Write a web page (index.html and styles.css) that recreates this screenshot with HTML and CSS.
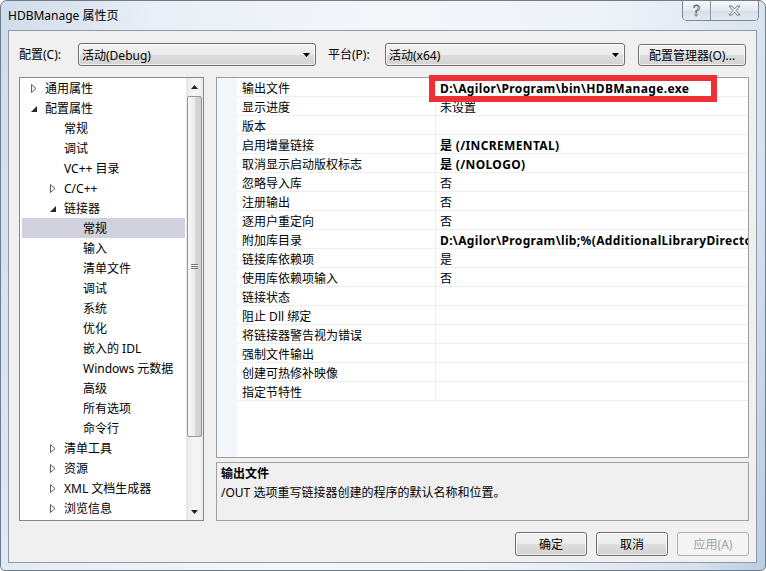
FILE: index.html
```html
<!DOCTYPE html>
<html lang="zh-CN">
  <head>
    <meta charset="UTF-8" />
    <title>HDBManage 属性页</title>
    <link rel="stylesheet" href="styles.css">
  </head>
  <body>
    <div class="window">
      <div class="titlebar">
        <span class="title">HDBManage 属性页</span>
        <div class="caption">
          <span class="cap cap-help">?</span>
          <span class="cap cap-close">
            <svg width="13" height="11" viewBox="0 0 13 11"><path d="M1 1h3l2.5 3 2.5-3h3l-4 4.5 4 4.5h-3l-2.5-3-2.5 3h-3l4-4.5z" fill="#f6f6f6" stroke="#6a6f75" stroke-width="0.9"/></svg>
          </span>
        </div>
      </div>

      <div class="client">
        <div class="toolbar">
          <span class="lbl lbl-cfg">配置(C):</span>
          <div class="combo combo-cfg">
            <span>活动(Debug)</span>
            <svg width="7" height="4" viewBox="0 0 7 4"><path d="M0 0H7L3.5 4Z" fill="#000"/></svg>
          </div>
          <span class="lbl lbl-plat">平台(P):</span>
          <div class="combo combo-plat">
            <span>活动(x64)</span>
            <svg width="7" height="4" viewBox="0 0 7 4"><path d="M0 0H7L3.5 4Z" fill="#000"/></svg>
          </div>
          <button class="btn btn-mgr">配置管理器(O)...</button>
        </div>

        <div class="main">
          <!-- 左侧树 -->
          <div class="tree">
            <ul class="tree-list">
              <li class="lv0"><i class="tw closed"></i>通用属性</li>
              <li class="lv0"><i class="tw open"></i>配置属性</li>
              <li class="lv1"><i class="tw"></i>常规</li>
              <li class="lv1"><i class="tw"></i>调试</li>
              <li class="lv1"><i class="tw"></i>VC++ 目录</li>
              <li class="lv1"><i class="tw closed"></i>C/C++</li>
              <li class="lv1"><i class="tw open"></i>链接器</li>
              <li class="lv2 sel"><i class="tw"></i>常规</li>
              <li class="lv2"><i class="tw"></i>输入</li>
              <li class="lv2"><i class="tw"></i>清单文件</li>
              <li class="lv2"><i class="tw"></i>调试</li>
              <li class="lv2"><i class="tw"></i>系统</li>
              <li class="lv2"><i class="tw"></i>优化</li>
              <li class="lv2"><i class="tw"></i>嵌入的 IDL</li>
              <li class="lv2"><i class="tw"></i>Windows 元数据</li>
              <li class="lv2"><i class="tw"></i>高级</li>
              <li class="lv2"><i class="tw"></i>所有选项</li>
              <li class="lv2"><i class="tw"></i>命令行</li>
              <li class="lv1"><i class="tw closed"></i>清单工具</li>
              <li class="lv1"><i class="tw closed"></i>资源</li>
              <li class="lv1"><i class="tw closed"></i>XML 文档生成器</li>
              <li class="lv1"><i class="tw closed"></i>浏览信息</li>
            </ul>
            <div class="vscroll">
              <div class="sb-btn"><svg width="7" height="4" viewBox="0 0 7 4"><path d="M0 4H7L3.5 0Z" fill="#222"/></svg></div>
              <div class="sb-track">
                <div class="sb-thumb"><span class="grip"></span></div>
              </div>
              <div class="sb-btn"><svg width="7" height="4" viewBox="0 0 7 4"><path d="M0 0H7L3.5 4Z" fill="#222"/></svg></div>
            </div>
          </div>

          <!-- 右侧属性表 -->
          <div class="right">
            <div class="grid">
              <div class="rows">
                <div class="row"><span class="gut"></span><span class="name">输出文件</span><span class="val b">D:\Agilor\Program\bin\HDBManage.exe</span></div>
                <div class="row"><span class="gut"></span><span class="name">显示进度</span><span class="val">未设置</span></div>
                <div class="row"><span class="gut"></span><span class="name">版本</span><span class="val"></span></div>
                <div class="row"><span class="gut"></span><span class="name">启用增量链接</span><span class="val b">是 (/INCREMENTAL)</span></div>
                <div class="row"><span class="gut"></span><span class="name">取消显示启动版权标志</span><span class="val b">是 (/NOLOGO)</span></div>
                <div class="row"><span class="gut"></span><span class="name">忽略导入库</span><span class="val">否</span></div>
                <div class="row"><span class="gut"></span><span class="name">注册输出</span><span class="val">否</span></div>
                <div class="row"><span class="gut"></span><span class="name">逐用户重定向</span><span class="val">否</span></div>
                <div class="row"><span class="gut"></span><span class="name">附加库目录</span><span class="val b">D:\Agilor\Program\lib;%(AdditionalLibraryDirectories)</span></div>
                <div class="row"><span class="gut"></span><span class="name">链接库依赖项</span><span class="val">是</span></div>
                <div class="row"><span class="gut"></span><span class="name">使用库依赖项输入</span><span class="val">否</span></div>
                <div class="row"><span class="gut"></span><span class="name">链接状态</span><span class="val"></span></div>
                <div class="row"><span class="gut"></span><span class="name">阻止 Dll 绑定</span><span class="val"></span></div>
                <div class="row"><span class="gut"></span><span class="name">将链接器警告视为错误</span><span class="val"></span></div>
                <div class="row"><span class="gut"></span><span class="name">强制文件输出</span><span class="val"></span></div>
                <div class="row"><span class="gut"></span><span class="name">创建可热修补映像</span><span class="val"></span></div>
                <div class="row"><span class="gut"></span><span class="name">指定节特性</span><span class="val"></span></div>
              </div>
              <div class="mark"></div>
            </div>
            <div class="desc">
              <div class="desc-title">输出文件</div>
              <div>/OUT 选项重写链接器创建的程序的默认名称和位置。</div>
            </div>
          </div>
        </div>

        <div class="footer">
          <button class="btn btn-dlg">确定</button>
          <button class="btn btn-dlg">取消</button>
          <button class="btn btn-dlg" disabled>应用(A)</button>
        </div>
      </div>
    </div>
  </body>
</html>
```

FILE: styles.css
```css
* {
  box-sizing: border-box;
}
html,
body {
  margin: 0;
  padding: 0;
}
body {
  width: 766px;
  height: 571px;
  overflow: hidden;
  font-family: "Noto Sans", "Noto Sans CJK SC", sans-serif;
  font-size: 12px;
  color: #000;
  background: #fff;
}
.window {
  width: 766px;
  height: 571px;
  display: flex;
  flex-direction: column;
  padding: 0 8px 7px 7px;
  border: 1px solid #6f7c8a;
  border-radius: 7px 7px 5px 5px;
  background: linear-gradient(100deg, #cfdce9 0%, #e9eff6 18%, #f4f7fa 45%, #eef3f8 70%, #d5e1ee 92%, #b9cde2 100%);
}

/* 标题栏 */
.titlebar {
  height: 29px;
  display: flex;
  justify-content: space-between;
  align-items: flex-start;
  margin-right: -2px;
}
.title {
  padding-top: 6px;
  line-height: 17px;
}
.caption {
  display: flex;
  border: 1px solid #7b8794;
  border-top: none;
  border-radius: 0 0 5px 5px;
  overflow: hidden;
}
.cap {
  height: 19px;
  display: flex;
  align-items: center;
  justify-content: center;
  background: linear-gradient(#f6f8fb, #e3e9f0 50%, #d6dee8 51%, #e4eaf1);
}
.cap-help {
  width: 28px;
  border-right: 1px solid #8d98a5;
  font-family: "DejaVu Serif", serif;
  font-size: 14px;
  color: #f8f8f8;
  -webkit-text-stroke: 0.8px #6a6f75;
}
.cap-close {
  width: 47px;
}

/* 客户区 */
.client {
  flex: 1;
  display: flex;
  flex-direction: column;
  padding: 12px 7px 0 10px;
  background: #f0f0f0;
  border: 1px solid #8e9aa7;
}
.toolbar {
  height: 23px;
  display: flex;
  align-items: center;
}
.lbl {
  line-height: 23px;
}
.lbl-cfg {
  width: 59px;
}
.lbl-plat {
  width: 57px;
  margin-left: 12px;
}
.combo {
  height: 23px;
  display: flex;
  align-items: center;
  justify-content: space-between;
  padding: 0 5px 0 3px;
  border: 1px solid #707070;
  border-radius: 3px;
  background: linear-gradient(#f3f3f3, #ebebeb 50%, #dddddd 51%, #d3d3d3);
  box-shadow: inset 0 0 0 1px rgba(255, 255, 255, 0.7);
}
.combo-cfg {
  width: 238px;
}
.combo-plat {
  width: 240px;
}
.btn {
  font-family: inherit;
  font-size: 12px;
  color: #000;
  padding: 0;
  border: 1px solid #707070;
  border-radius: 3px;
  background: linear-gradient(#f3f3f3, #ebebeb 50%, #dddddd 51%, #d3d3d3);
  box-shadow: inset 0 0 0 1px rgba(255, 255, 255, 0.7);
}
.btn-mgr {
  width: 108px;
  height: 22px;
  margin-left: 13px;
}

/* 主体 */
.main {
  height: 444px;
  margin-top: 11px;
  display: flex;
  gap: 12px;
}
.tree {
  width: 185px;
  flex: none;
  display: flex;
  background: #fff;
  border: 1px solid #828790;
}
.tree-list {
  flex: 1;
  list-style: none;
  margin: 0;
  padding: 0 1px 0 2px;
}
.tree-list li {
  height: 20px;
  display: flex;
  align-items: center;
  white-space: nowrap;
}
.tree-list li.sel {
  background: #d0d1dc;
}
.lv0 {
  padding-left: 9px;
}
.lv1 {
  padding-left: 28px;
}
.lv2 {
  padding-left: 47px;
}
.tw {
  width: 14px;
  height: 20px;
  flex: none;
  display: block;
  background-repeat: no-repeat;
}
.tw.closed {
  background-image: url("data:image/svg+xml;utf8,<svg xmlns='http://www.w3.org/2000/svg' width='6' height='9'><path d='M0.5 0.5L5 4.5L0.5 8.5Z' fill='white' stroke='%23606060'/></svg>");
  background-position: 0 6px;
}
.tw.open {
  background-image: url("data:image/svg+xml;utf8,<svg xmlns='http://www.w3.org/2000/svg' width='6' height='6'><path d='M6 0L6 6L0 6Z' fill='%23262626'/></svg>");
  background-position: 0 8px;
}

/* 滚动条 */
.vscroll {
  width: 17px;
  flex: none;
  display: flex;
  flex-direction: column;
  background: linear-gradient(to right, #e6e6e6, #f4f4f4 40%, #f4f4f4 80%, #e9e9e9);
}
.sb-btn {
  height: 17px;
  display: flex;
  align-items: center;
  justify-content: center;
}
.sb-track {
  flex: 1;
  padding: 1px 1px 0 1px;
}
.sb-thumb {
  height: 341px;
  display: flex;
  align-items: center;
  justify-content: center;
  border: 1px solid #979797;
  border-radius: 2px;
  background: linear-gradient(to right, #f7f7f7, #ececec 50%, #d9d9d9 51%, #cfcfcf);
}
.grip {
  width: 7px;
  height: 5px;
  border-top: 1px solid #777;
  border-bottom: 1px solid #777;
  background: linear-gradient(#fff 1px, #777 1px, #777 2px, transparent 2px);
}

/* 属性表 */
.right {
  flex: 1;
  min-width: 0;
  display: flex;
  flex-direction: column;
  gap: 4px;
}
.grid {
  position: relative;
  height: 381px;
  background: #fff;
  border: 1px solid #9d9d9d;
}
.rows {
  height: 100%;
  overflow: hidden;
  background: linear-gradient(to right, #f3f6fb 20px, #fff 20px);
}
.row {
  height: 19px;
  display: flex;
}
.gut {
  width: 20px;
  flex: none;
}
.name,
.val {
  padding-top: 2px;
  line-height: 18px;
  border-bottom: 1px solid #efefef;
  white-space: nowrap;
  overflow: hidden;
}
.name {
  width: 199px;
  flex: none;
  padding-left: 5px;
  border-right: 1px solid #efefef;
}
.val {
  flex: 1;
  padding-left: 4px;
}
.val.b {
  font-weight: bold;
  letter-spacing: 0.35px;
}
/* 红色标注框 */
.mark {
  position: absolute;
  left: 212px;
  top: -3px;
  width: 288px;
  height: 27px;
  border: 6px solid #ee2f36;
}

.desc {
  flex: 1;
  padding: 1px 4px 0;
  line-height: 19px;
  background: #f0f0f0;
  border: 1px solid #a0a0a0;
}
.desc-title {
  font-weight: bold;
}

/* 底部按钮 */
.footer {
  margin-top: 11px;
  display: flex;
  justify-content: flex-end;
  gap: 9px;
}
.btn-dlg {
  width: 72px;
  height: 24px;
}
.btn-dlg:disabled {
  color: #a0a0a0;
  border-color: #adb2b5;
  background: #f4f4f4;
  box-shadow: none;
}
```
